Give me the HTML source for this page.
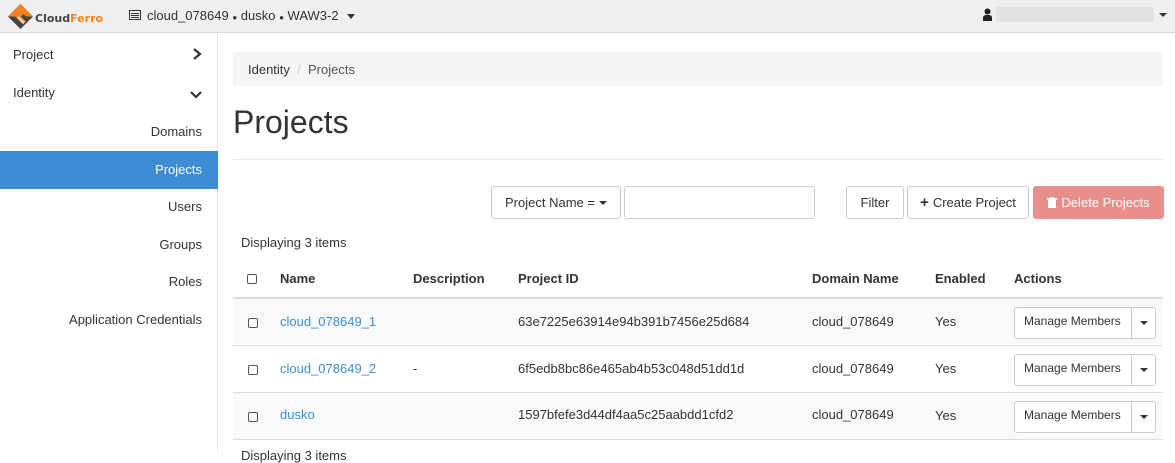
<!DOCTYPE html>
<html><head><meta charset="utf-8"><style>
*{box-sizing:border-box}
body{margin:0;width:1175px;height:452px;overflow:hidden;font-family:"Liberation Sans",sans-serif;font-size:13px;color:#333;background:#fff;position:relative}
.top{position:absolute;left:0;top:0;width:1175px;height:33px;background:#efefef;border-bottom:1px solid #d8d8d8}
.side{position:absolute;left:0;top:34px;width:218px;height:418px;background:#fff;border-right:1px solid #e5e5e5}
.side div{position:absolute;font-size:13px;color:#333}
.abs{position:absolute}
.btn{position:absolute;border:1px solid #ccc;border-radius:3px;background:#fff;font-size:13px;color:#333;display:flex;align-items:center;justify-content:center}
.row{position:absolute;left:233px;width:930px;height:47px;border-top:1px solid #ddd}
.cell{position:absolute;top:15px;font-size:13px}
a{color:#3b8fd4;text-decoration:none}
.cb{position:absolute;left:15px;top:19px;width:10px;height:10px;border:1px solid #555;border-radius:2px;background:#fff}
.mm{position:absolute;left:781px;top:8px;width:142px;height:32px;border:1px solid #ccc;border-radius:3px;background:#fff}
.mm span{position:absolute;left:9px;top:6px;font-size:12px}
.mm i{position:absolute;left:116px;top:0;width:1px;height:30px;background:#ccc}
.mm b{position:absolute;left:125px;top:13px;border-left:4px solid transparent;border-right:4px solid transparent;border-top:4px solid #333}
</style></head><body>
<div class="top">
 <svg class="abs" style="left:7px;top:3px" width="27" height="27" viewBox="0 0 27 27"><path d="M13.5 1L26 13.5 13.5 26 1 13.5z" fill="#444"/><path d="M13.5 1L26 13.5 19 13.5 13.5 8 8 13.5 1 13.5z" fill="#f5821f"/><path d="M8 13.5l5.5-5.5 3 3-2.5 2.5 5 5-3 3-8-8z" fill="#f5821f"/><path d="M11 14l6 6" stroke="#ddd" stroke-width="2"/></svg>
 <div class="abs" style="left:35px;top:12px;font-family:'DejaVu Sans',sans-serif;font-weight:bold;font-size:11px;color:#444">Cloud<span style="color:#f5821f">Ferro</span></div>
 <svg class="abs" style="left:129px;top:10px" width="12" height="10"><rect x="0.5" y="0.5" width="11" height="9" fill="none" stroke="#333"/><rect x="2" y="3" width="8" height="1" fill="#333"/><rect x="2" y="5" width="8" height="1" fill="#333"/><rect x="2" y="7" width="8" height="1" fill="#333"/></svg>
 <div class="abs" style="left:147px;top:8px;font-size:13px">cloud_078649 <span style="font-size:8px">●</span> dusko <span style="font-size:8px">●</span> WAW3-2</div>
 <div class="abs" style="left:347px;top:14px;border-left:4px solid transparent;border-right:4px solid transparent;border-top:5px solid #333"></div>
 <svg class="abs" style="left:983px;top:8px" width="9" height="13"><circle cx="4.5" cy="3.5" r="3" fill="#222"/><path d="M0 13v-3q0-3 3-3h3q3 0 3 3v3z" fill="#222"/></svg>
 <div class="abs" style="left:996px;top:7px;width:158px;height:15px;background:#e2e2e2"></div>
 <div class="abs" style="left:1159px;top:13px;border-left:4px solid transparent;border-right:4px solid transparent;border-top:4px solid #333"></div>
</div>
<div class="side">
 <div style="left:13px;top:13px">Project</div>
 <svg class="abs" style="left:192px;top:14px" width="10" height="12"><path d="M2 1l6 5-6 5" fill="none" stroke="#333" stroke-width="2.2"/></svg>
 <div style="left:13px;top:51px">Identity</div>
 <svg class="abs" style="left:190px;top:56px" width="12" height="10"><path d="M1 2l5 5 5-5" fill="none" stroke="#333" stroke-width="2.2"/></svg>
 <div style="right:15px;top:90px">Domains</div>
 <div style="left:0;top:117px;width:218px;height:38px;background:#3c8dd4"></div>
 <div style="right:15px;top:128px;color:#fff">Projects</div>
 <div style="right:15px;top:165px">Users</div>
 <div style="right:15px;top:203px">Groups</div>
 <div style="right:15px;top:240px">Roles</div>
 <div style="right:15px;top:278px">Application Credentials</div>
</div>
<div class="abs" style="left:233px;top:52px;width:930px;height:34px;background:#f5f5f5;border-radius:3px"></div>
<div class="abs" style="left:248px;top:62px">Identity <span style="color:#ccc">&nbsp;/&nbsp;</span> <span style="color:#555">Projects</span></div>
<div class="abs" style="left:233px;top:104px;font-size:32px;color:#333">Projects</div>
<div class="abs" style="left:233px;top:159px;width:930px;height:1px;background:#e8e8e8"></div>
<div class="btn" style="left:491px;top:186px;width:130px;height:33px">Project Name = <span style="display:inline-block;margin-left:4px;border-left:4px solid transparent;border-right:4px solid transparent;border-top:4px solid #333"></span></div>
<div class="btn" style="left:624px;top:186px;width:191px;height:33px"></div>
<div class="btn" style="left:846px;top:186px;width:58px;height:33px">Filter</div>
<div class="btn" style="left:907px;top:186px;width:122px;height:33px"><b style="font-size:15px;margin-right:4px">+</b>Create Project</div>
<div class="btn" style="left:1033px;top:186px;width:131px;height:33px;background:#e88f8c;border-color:#e88f8c;color:#fff"><svg width="10" height="11" style="margin-right:4px"><rect x="0" y="1" width="10" height="2" fill="#fff"/><rect x="1" y="3" width="8" height="8" fill="#fff"/><rect x="3" y="0" width="4" height="1" fill="#fff"/></svg>Delete Projects</div>
<div class="abs" style="left:241px;top:235px">Displaying 3 items</div>
<div class="abs" style="left:247px;top:274px;width:10px;height:10px;border:1px solid #555;border-radius:2px"></div>
<div class="abs" style="left:280px;top:271px;font-weight:bold">Name</div>
<div class="abs" style="left:413px;top:271px;font-weight:bold">Description</div>
<div class="abs" style="left:518px;top:271px;font-weight:bold">Project ID</div>
<div class="abs" style="left:812px;top:271px;font-weight:bold">Domain Name</div>
<div class="abs" style="left:935px;top:271px;font-weight:bold">Enabled</div>
<div class="abs" style="left:1014px;top:271px;font-weight:bold">Actions</div>
<div class="row" style="top:297px;background:#f9f9f9;border-top:2px solid #ddd"><div class="cb"></div><div class="cell" style="left:47px"><a>cloud_078649_1</a></div><div class="cell" style="left:285px">63e7225e63914e94b391b7456e25d684</div><div class="cell" style="left:579px">cloud_078649</div><div class="cell" style="left:702px">Yes</div><div class="mm"><span>Manage Members</span><i></i><b></b></div></div>
<div class="row" style="top:345px"><div class="cb"></div><div class="cell" style="left:47px"><a>cloud_078649_2</a></div><div class="cell" style="left:180px">-</div><div class="cell" style="left:285px">6f5edb8bc86e465ab4b53c048d51dd1d</div><div class="cell" style="left:579px">cloud_078649</div><div class="cell" style="left:702px">Yes</div><div class="mm"><span>Manage Members</span><i></i><b></b></div></div>
<div class="row" style="top:392px;background:#f9f9f9"><div class="cb"></div><div class="cell" style="left:47px;top:14px"><a>dusko</a></div><div class="cell" style="left:285px;top:14px">1597bfefe3d44df4aa5c25aabdd1cfd2</div><div class="cell" style="left:579px;top:14px">cloud_078649</div><div class="cell" style="left:702px">Yes</div><div class="mm"><span>Manage Members</span><i></i><b></b></div></div>
<div class="abs" style="left:233px;top:439px;width:930px;height:1px;background:#ddd"></div>
<div class="abs" style="left:241px;top:448px">Displaying 3 items</div>
</body></html>
